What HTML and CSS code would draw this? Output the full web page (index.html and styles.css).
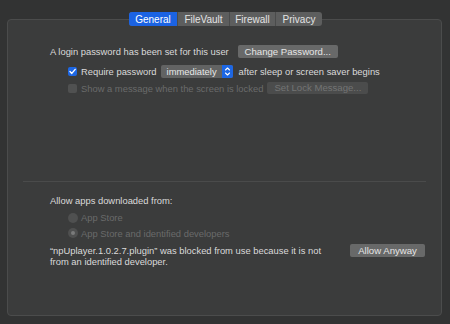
FILE: index.html
```html
<!DOCTYPE html>
<html lang="en">
<head>
    <meta charset="UTF-8">
    <title>Security &amp; Privacy</title>
    <link rel="stylesheet" href="styles.css">
</head>
<body>

    <div class="window">
        <!-- Tab bar -->
        <div class="tabs">
            <div class="tab selected">General</div>
            <div class="tab">FileVault</div>
            <div class="tab">Firewall</div>
            <div class="tab">Privacy</div>
        </div>

        <div class="panel">
            <div class="row row-login">
                <span>A login password has been set for this user</span>
                <button class="btn">Change Password...</button>
            </div>

            <div class="row row-require">
                <span class="check on">
                    <svg viewBox="0 0 9 9" width="9" height="9"><path d="M2 4.6 L3.8 6.4 L7.2 2.4" fill="none" stroke="#fff" stroke-width="1.4" stroke-linecap="round" stroke-linejoin="round"/></svg>
                </span>
                <span>Require password</span>
                <span class="popup">
                    <span class="popup-label">immediately</span>
                    <span class="popup-arrows">
                        <svg viewBox="0 0 11 13" width="11" height="13"><path d="M3.5 5 L5.5 3 L7.5 5 M3.5 8 L5.5 10 L7.5 8" fill="none" stroke="#fff" stroke-width="1.1" stroke-linecap="round" stroke-linejoin="round"/></svg>
                    </span>
                </span>
                <span>after sleep or screen saver begins</span>
            </div>

            <div class="row row-message disabled">
                <span class="check"></span>
                <span>Show a message when the screen is locked</span>
                <button class="btn" disabled>Set Lock Message...</button>
            </div>

            <div class="spacer"></div>
            <div class="separator"></div>

            <div class="row row-allow">Allow apps downloaded from:</div>

            <div class="row row-radio disabled">
                <span class="radio"></span>
                <span>App Store</span>
            </div>
            <div class="row row-radio disabled">
                <span class="radio selected"></span>
                <span>App Store and identified developers</span>
            </div>

            <div class="row row-blocked">
                <p>&ldquo;npUplayer.1.0.2.7.plugin&rdquo; was blocked from use because it is not from an identified developer.</p>
                <button class="btn btn-allow">Allow Anyway</button>
            </div>
        </div>
    </div>

</body>
</html>
```

FILE: styles.css
```css
body {
    margin: 0;
    background-color: #323333;
    font-family: "Liberation Sans", Arial, sans-serif;
    font-size: 9.4px;
    color: #dadada;
}
.window {
    display: flex;
    flex-direction: column;
    padding: 12px 8px 8px 7px;
    height: 304px;
}
.tabs {
    display: flex;
    align-self: center;
    margin-left: 2px;
    height: 14px;
    margin-bottom: -7px;
    position: relative;
    z-index: 1;
    border-radius: 3px;
    overflow: hidden;
    background: #5d5e5e;
    font-size: 10px;
}
.tab {
    display: flex;
    align-items: center;
    justify-content: center;
    height: 14px;
    color: #e4e4e4;
    border-left: 1px solid #4a4b4b;
}
.tab:nth-child(1) { width: 48px; border-left: none; }
.tab:nth-child(2) { width: 51px; }
.tab:nth-child(3) { width: 45px; }
.tab:nth-child(4) { width: 46px; }
.tab.selected {
    background: #1b63e3;
    color: #fff;
}
.panel {
    flex: 1;
    display: flex;
    flex-direction: column;
    background: #3b3c3c;
    border: 1px solid #4b4c4c;
    border-radius: 4px;
    padding: 25px 15px 0 15px;
}
.row {
    display: flex;
    align-items: center;
    gap: 5px;
    padding-left: 27px;
    white-space: nowrap;
}
.row-login { height: 13px; gap: 9px; }
.row-require { height: 13px; margin-top: 7px; padding-left: 45px; gap: 4px; }
.row-message { height: 12px; margin-top: 4px; padding-left: 45px; gap: 4px; }
.disabled { color: #6a6b6b; }
.btn {
    height: 13px;
    padding: 0;
    border: none;
    border-radius: 2px;
    background: #686969;
    color: #e6e6e6;
    font-family: inherit;
    font-size: 9.6px;
    line-height: 13px;
    white-space: nowrap;
}
.row-login .btn { width: 100px; }
.btn:disabled {
    width: 101px;
    height: 12px;
    line-height: 12px;
    background: #4b4c4c;
    color: #737474;
}
.check {
    width: 9px;
    height: 9px;
    border-radius: 2px;
    background: #505151;
    display: flex;
}
.check.on { background: #1d67e4; }
.popup {
    display: flex;
    height: 13px;
    width: 72px;
    border-radius: 2px;
    overflow: hidden;
    background: #626363;
    margin-right: 2px;
}
.popup-label {
    flex: 1;
    padding-left: 6px;
    line-height: 13px;
    color: #e8e8e8;
}
.popup-arrows {
    width: 11px;
    background: #1d67e4;
    display: flex;
}
.spacer { flex: 0 0 87px; }
.separator {
    height: 1px;
    background: #4a4b4b;
}
.row-allow { height: 12px; margin-top: 12px; }
.row-radio { height: 11px; margin-top: 6px; padding-left: 45px; gap: 3px; }
.row-radio + .row-radio { margin-top: 4.5px; }
.radio {
    width: 10px;
    height: 10px;
    border-radius: 50%;
    background: #4f5050;
    display: flex;
    align-items: center;
    justify-content: center;
}
.radio.selected::after {
    content: "";
    width: 4px;
    height: 4px;
    border-radius: 50%;
    background: #7a7b7b;
}
.row-blocked {
    align-items: flex-start;
    justify-content: space-between;
    margin-top: 6px;
    padding-right: 1px;
    white-space: normal;
}
.row-blocked p {
    margin: 0;
    width: 280px;
    line-height: 11.5px;
}
.btn-allow {
    width: 75px;
    margin-top: -1px;
    flex-shrink: 0;
}
```
